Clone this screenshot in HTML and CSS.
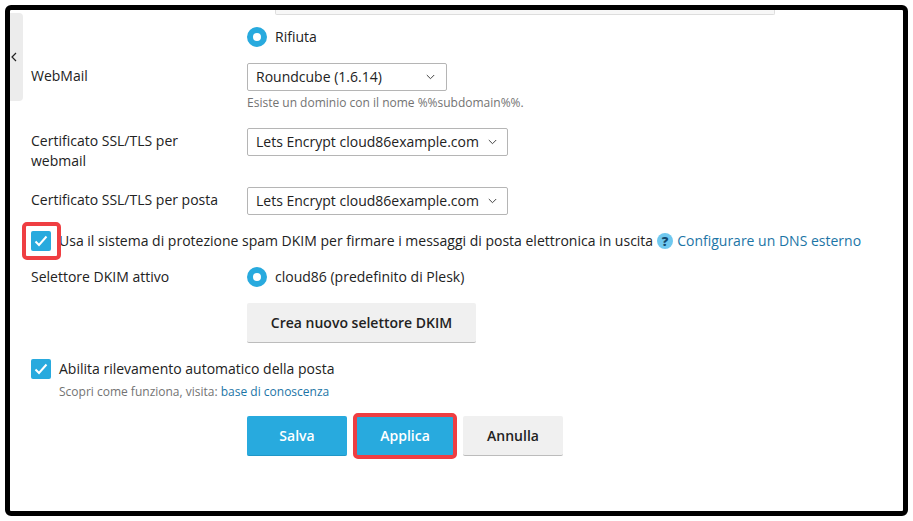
FILE: index.html
```html
<!DOCTYPE html>
<html>
  <head>
    <title>Impostazioni posta</title>
    <link rel="stylesheet" href="styles.css">
  </head>
  <body>
    <div class="frame">
      <!-- Sidebar toggle -->
      <div class="side-tab">
        <svg width="6" height="10" viewBox="0 0 6 10"><path d="M5 1 1 5l4 4" fill="none" stroke="#222" stroke-width="1.2"/></svg>
      </div>

      <div class="top-input"></div>

      <div class="row row-reject">
        <div class="label"></div>
        <div class="control radio-line">
          <span class="radio"></span>
          <span>Rifiuta</span>
        </div>
      </div>

      <div class="row row-webmail">
        <div class="label label-select">WebMail</div>
        <div class="control">
          <div class="select select-short">
            <span>Roundcube (1.6.14)</span>
            <svg class="caret" width="9" height="6" viewBox="0 0 9 6"><path d="M.8 1 4.500 4.700 8.200 1" fill="none" stroke="#444" stroke-width="1"/></svg>
          </div>
          <div class="hint hint-domain">Esiste un dominio con il nome %%subdomain%%.</div>
        </div>
      </div>

      <div class="row row-cert">
        <div class="label label-select label-wrap">Certificato SSL/TLS per webmail</div>
        <div class="control">
          <div class="select select-long">
            <span>Lets Encrypt cloud86example.com</span>
            <svg class="caret" width="9" height="6" viewBox="0 0 9 6"><path d="M.8 1 4.500 4.700 8.200 1" fill="none" stroke="#444" stroke-width="1"/></svg>
          </div>
        </div>
      </div>

      <div class="row row-cert-mail">
        <div class="label label-select">Certificato SSL/TLS per posta</div>
        <div class="control">
          <div class="select select-long">
            <span>Lets Encrypt cloud86example.com</span>
            <svg class="caret" width="9" height="6" viewBox="0 0 9 6"><path d="M.8 1 4.500 4.700 8.200 1" fill="none" stroke="#444" stroke-width="1"/></svg>
          </div>
        </div>
      </div>

      <div class="check-line check-dkim">
        <span class="checkbox">
          <svg width="14" height="12" viewBox="0 0 14 12"><path d="M1.500 6.500 5 10l7.500-8.500" fill="none" stroke="#fff" stroke-width="2"/></svg>
          <span class="highlight highlight-check"></span>
        </span>
        <span>Usa il sistema di protezione spam DKIM per firmare i messaggi di posta elettronica in uscita</span>
        <span class="help">?</span>
        <a class="link" href="#">Configurare un DNS esterno</a>
      </div>

      <div class="row row-selector">
        <div class="label">Selettore DKIM attivo</div>
        <div class="control radio-line">
          <span class="radio"></span>
          <span>cloud86 (predefinito di Plesk)</span>
        </div>
      </div>

      <div class="row row-new-selector">
        <div class="label"></div>
        <div class="control">
          <button class="btn btn-wide">Crea nuovo selettore DKIM</button>
        </div>
      </div>

      <div class="check-line check-auto">
        <span class="checkbox">
          <svg width="14" height="12" viewBox="0 0 14 12"><path d="M1.500 6.500 5 10l7.500-8.500" fill="none" stroke="#fff" stroke-width="2"/></svg>
        </span>
        <span>Abilita rilevamento automatico della posta</span>
      </div>
      <div class="hint hint-auto">Scopri come funziona, visita: <a class="link" href="#">base di conoscenza</a></div>

      <!-- Form buttons -->
      <div class="actions">
        <button class="btn btn-primary">Salva</button>
        <span class="btn-wrap">
          <button class="btn btn-primary">Applica</button>
          <span class="highlight highlight-btn"></span>
        </span>
        <button class="btn">Annulla</button>
      </div>
    </div>
  </body>
</html>
```

FILE: styles.css
```css
* {
  box-sizing: border-box;
}

body {
  margin: 0;
  background-color: #fff;
  font-family: "Open Sans", Arial, sans-serif;
  font-size: 14px;
  line-height: 20px;
  color: #222;
}

.frame {
  position: relative;
  width: 903px;
  height: 511px;
  margin: 5px 0 0 5px;
  padding: 0 21px;
  border: 5px solid #000;
  border-radius: 6px;
  background-color: #fff;
  overflow: hidden;
}

/* Sidebar toggle */
.side-tab {
  position: absolute;
  left: 0;
  top: 3px;
  width: 13px;
  height: 88px;
  padding-left: 1px;
  display: flex;
  align-items: center;
  background-color: #ececec;
  border-radius: 0 4px 4px 0;
}

.top-input {
  width: 500px;
  height: 5px;
  margin-left: 244px;
  background-color: #f7f7f7;
  border: 1px solid #ddd;
  border-top: none;
  border-radius: 0 0 2px 2px;
}

.row {
  display: flex;
}

.label {
  width: 216px;
  flex-shrink: 0;
}

.label-select {
  padding-top: 3px;
}

.label-wrap {
  padding-right: 40px;
}

.control {
  flex: 1;
}

.radio-line {
  display: flex;
  align-items: center;
  gap: 8px;
}

.radio {
  width: 20px;
  height: 20px;
  border-radius: 50%;
  border: 6px solid #28aade;
  background-color: #fff;
}

.select {
  display: flex;
  align-items: center;
  justify-content: space-between;
  height: 28px;
  padding: 0 11px 0 8px;
  background-color: #fff;
  border: 1px solid #b5b5b5;
  border-radius: 2px;
}

.select-short {
  width: 200px;
}

.select-long {
  width: 261px;
  padding-right: 10px;
}

.hint {
  font-size: 12px;
  line-height: 16px;
  color: #737373;
}

.hint-domain {
  margin-top: 4px;
}

.link {
  color: #1c75a6;
  text-decoration: none;
}

.check-line {
  display: flex;
  align-items: center;
}

.checkbox {
  position: relative;
  width: 20px;
  height: 20px;
  margin-right: 8px;
  display: flex;
  align-items: center;
  justify-content: center;
  flex-shrink: 0;
  background-color: #28aade;
  border-radius: 2px;
}

.help {
  width: 16px;
  height: 16px;
  margin: 0 4px;
  border-radius: 50%;
  background-color: #6fc8ef;
  color: #12496e;
  font-size: 13px;
  font-weight: 800;
  line-height: 16px;
  text-align: center;
}

/* Red annotation boxes */
.highlight {
  position: absolute;
  border: 4px solid #ef3e42;
  border-radius: 5px;
}

.highlight-check {
  left: -9px;
  top: -9px;
  width: 39px;
  height: 38px;
}

.highlight-btn {
  left: -2px;
  top: -3px;
  width: 104px;
  height: 46px;
}

.btn {
  width: 100px;
  height: 40px;
  padding: 0;
  border: none;
  border-bottom: 1px solid #bcbcbc;
  border-radius: 2px;
  background-color: #f0f0f0;
  font-family: inherit;
  font-size: 14px;
  font-weight: 600;
  color: #222;
}

.btn-primary {
  background-color: #28aade;
  border-bottom-color: #1f97c7;
  color: #fff;
}

.btn-wide {
  width: 229px;
}

.btn-wrap {
  position: relative;
  display: block;
}

.actions {
  display: flex;
  gap: 8px;
  margin: 16px 0 0 216px;
}

/* Vertical rhythm of the form */
.row-reject {
  margin-top: 12px;
}

.row-webmail {
  margin-top: 16px;
}

.row-cert {
  margin-top: 17px;
}

.row-cert-mail {
  margin-top: 16px;
}

.check-dkim {
  margin-top: 16px;
}

.row-selector {
  margin-top: 16px;
}

.row-new-selector {
  margin-top: 16px;
}

.check-auto {
  margin-top: 16px;
}

.hint-auto {
  margin: 5px 0 0 28px;
}
```
